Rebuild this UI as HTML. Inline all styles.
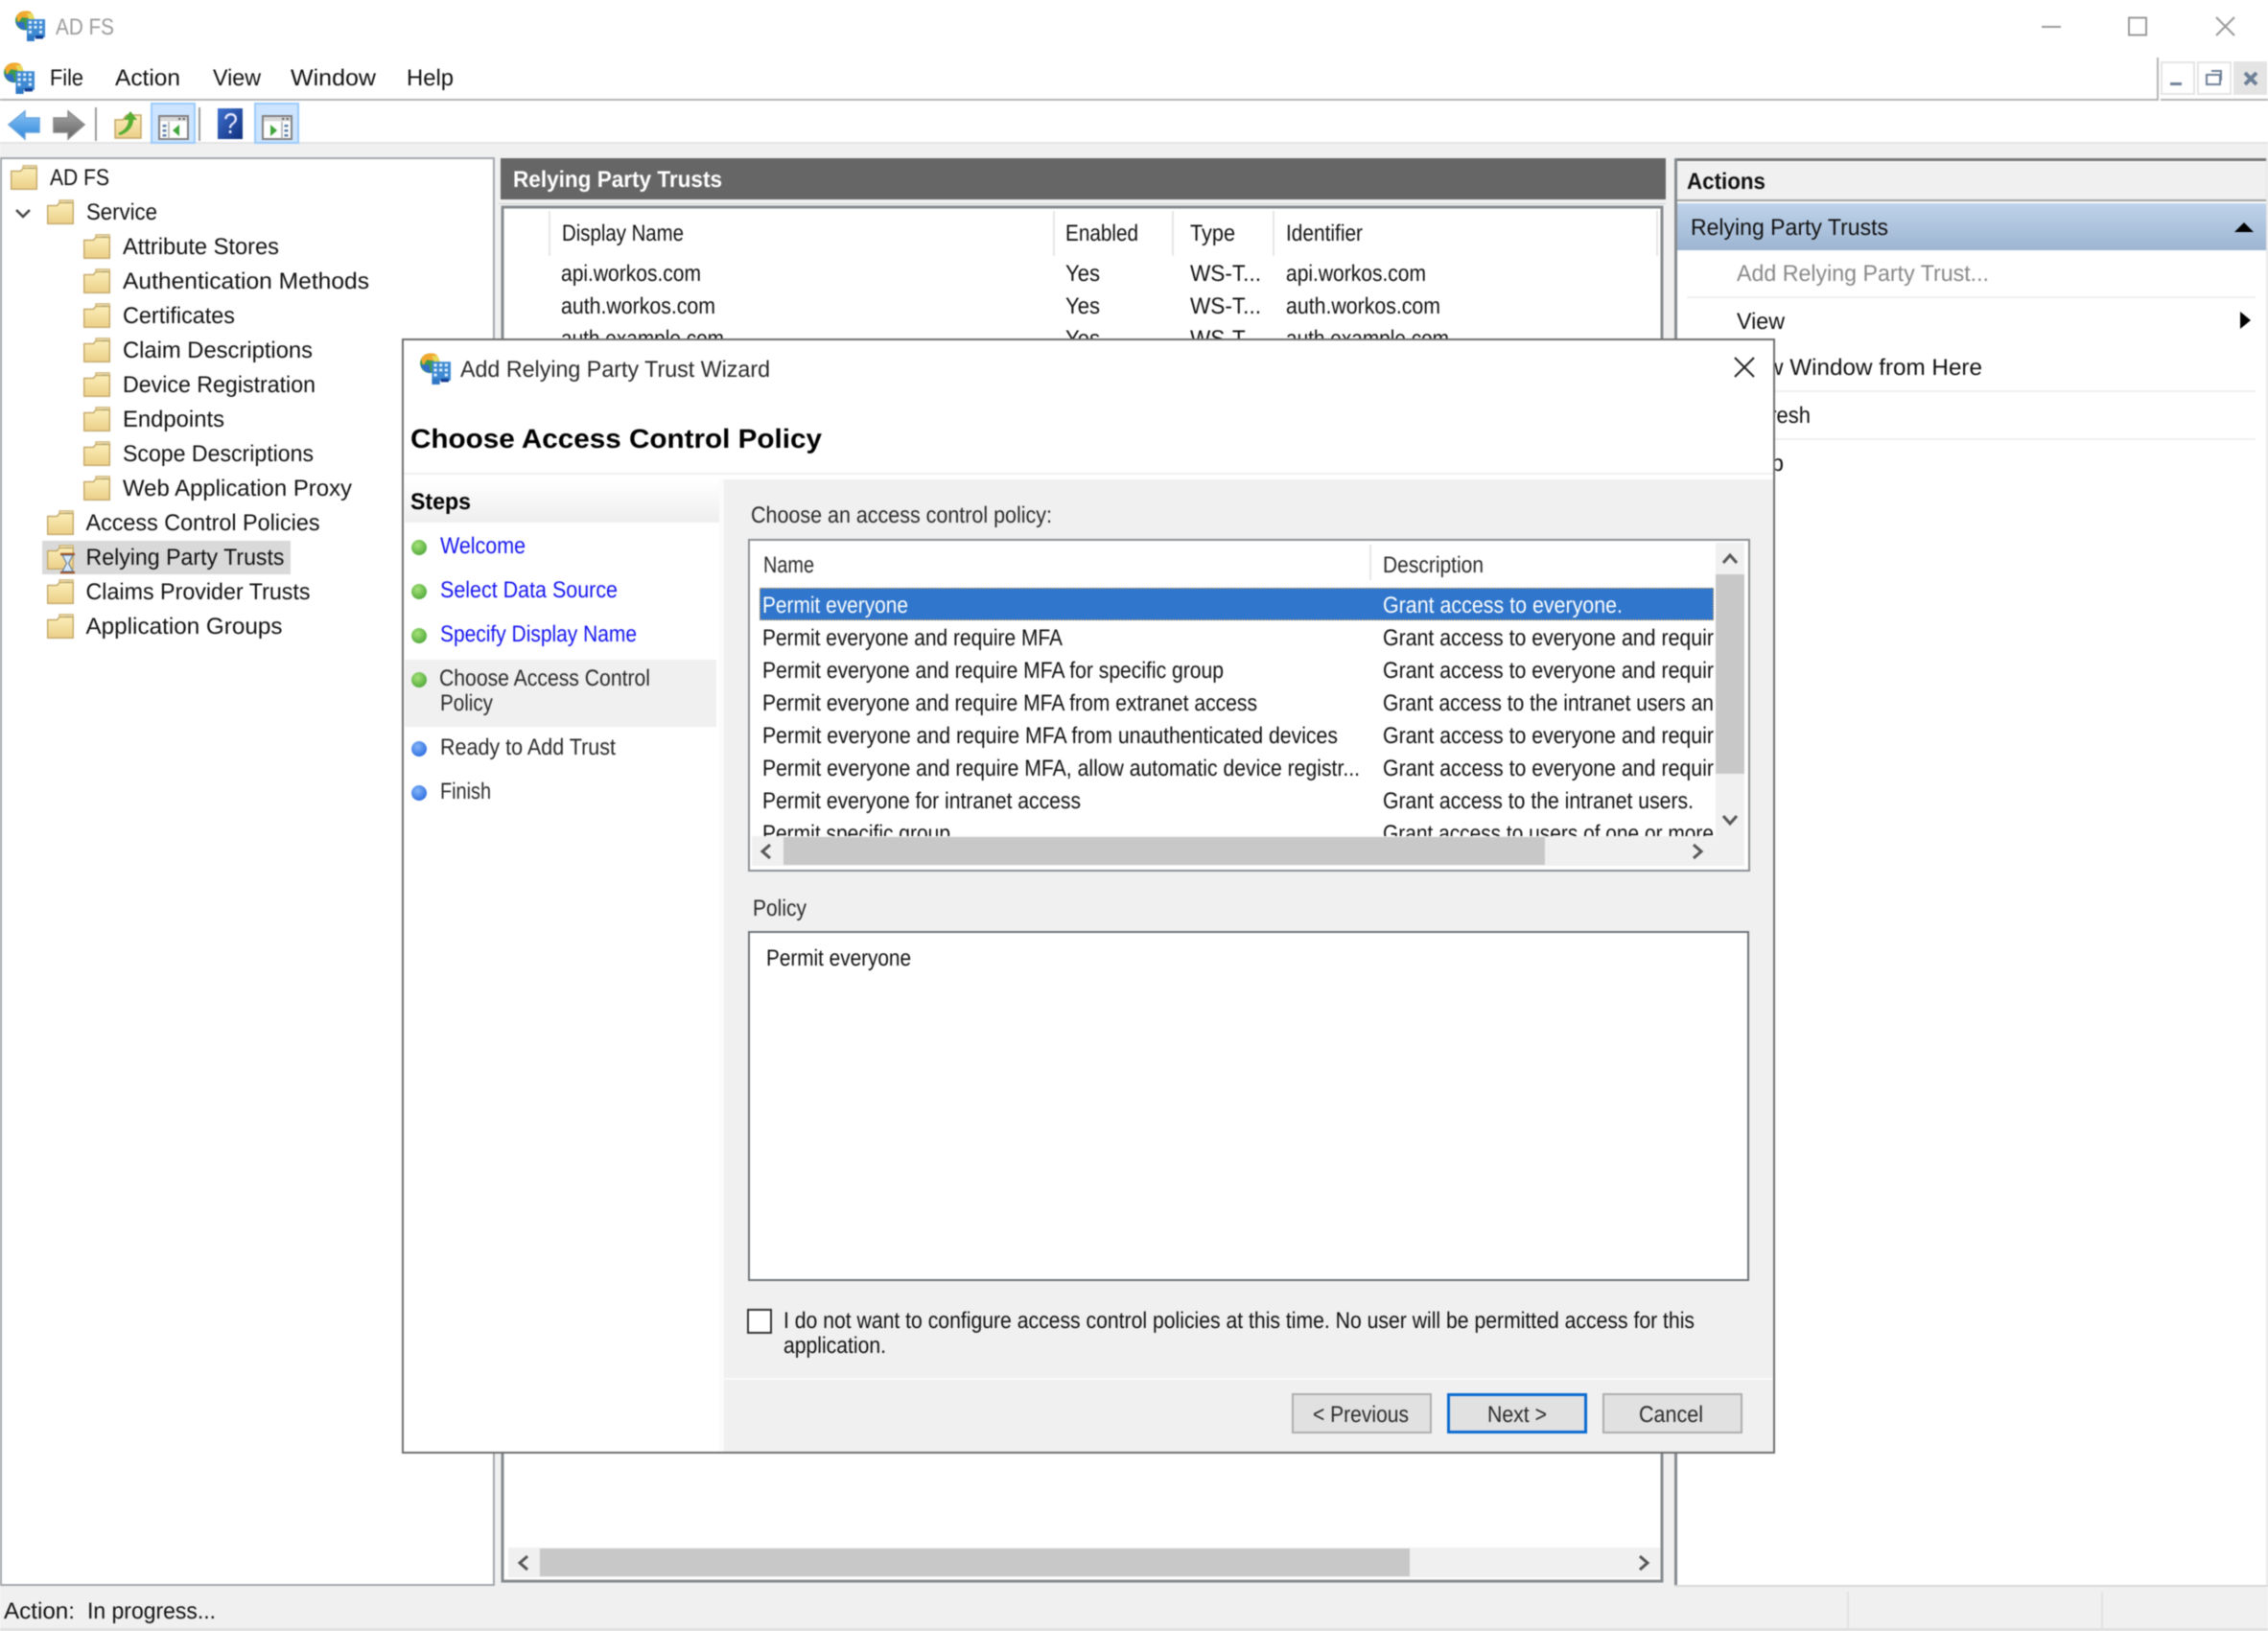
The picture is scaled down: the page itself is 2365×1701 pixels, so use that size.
<!DOCTYPE html>
<html lang="en">
<head>
<meta charset="utf-8">
<title>AD FS</title>
<style>
html,body{margin:0;padding:0;background:#fff;width:2365px;height:1701px;overflow:hidden}
svg{display:block;filter:blur(.4px)}
text{font-family:"Liberation Sans",Arial,sans-serif;font-size:24px;fill:#111;text-rendering:geometricPrecision}
.b{font-weight:bold}
.l{fill:#1414f0}
.g{fill:#2a2a2a}
.w{fill:#fff}
</style>
</head>
<body>
<svg xmlns="http://www.w3.org/2000/svg" width="2365" height="1701" viewBox="0 0 2365 1701">
<defs>
<linearGradient id="fg" x1="0" y1="0" x2="0" y2="1"><stop offset="0" stop-color="#fbeeb9"/><stop offset="1" stop-color="#ebcf88"/></linearGradient>
<linearGradient id="bluebar" x1="0" y1="0" x2="0" y2="1"><stop offset="0" stop-color="#bfd3ea"/><stop offset="1" stop-color="#9db5d2"/></linearGradient>
<linearGradient id="steps" x1="0" y1="0" x2="0" y2="1"><stop offset="0" stop-color="#fff"/><stop offset="1" stop-color="#eeeeee"/></linearGradient>
<linearGradient id="backg" x1="0" y1="0" x2="0" y2="1"><stop offset="0" stop-color="#8cc6f5"/><stop offset="1" stop-color="#2e86dc"/></linearGradient>
<linearGradient id="fwdg" x1="0" y1="0" x2="0" y2="1"><stop offset="0" stop-color="#a8a8a8"/><stop offset="1" stop-color="#636363"/></linearGradient>
<linearGradient id="helpg" x1="0" y1="0" x2="1" y2="1"><stop offset="0" stop-color="#3f72d0"/><stop offset="1" stop-color="#102f7c"/></linearGradient>
<radialGradient id="gb" cx=".4" cy=".35" r=".7"><stop offset="0" stop-color="#a6e27a"/><stop offset="1" stop-color="#4fa83a"/></radialGradient>
<radialGradient id="bb" cx=".4" cy=".35" r=".7"><stop offset="0" stop-color="#86b6f8"/><stop offset="1" stop-color="#2b6be0"/></radialGradient>
<symbol id="folder" viewBox="0 0 28 26" overflow="visible">
<path d="M13 0.8H27.2V8H13z" fill="#f6e7b4" stroke="#c9ad6d" stroke-width="1.2"/>
<rect x="19" y="2.5" width="6" height="2.5" fill="#6db4ea"/>
<path d="M0.7 6.5H10.5L13 3.5H27.3V25.3H0.7z" fill="url(#fg)" stroke="#c4a868" stroke-width="1.4"/>
</symbol>
<symbol id="app" viewBox="0 0 32 32" overflow="visible">
<circle cx="11" cy="10.5" r="10" fill="#3e9a4a"/>
<path d="M2 6C5 0 14-1 18 2L14 8 8 7 4 13z" fill="#f2a92f"/>
<path d="M1.5 12C3 17 7 20 12 20.5L10 12z" fill="#2f6fc9"/>
<path d="M13 3L19 3 21 9 15 9z" fill="#e7d95a"/>
<rect x="13" y="9" width="19" height="19" fill="#3f8ad2"/>
<g fill="#dff0ff"><rect x="15" y="11" width="3" height="2.8"/><rect x="20.5" y="11" width="3" height="2.8"/><rect x="26" y="11" width="3" height="2.8"/><rect x="15" y="16" width="3" height="2.8"/><rect x="20.5" y="16" width="3" height="2.8"/><rect x="26" y="16" width="3" height="2.8"/><rect x="15" y="21" width="3" height="2.8"/><rect x="26" y="21" width="3" height="2.8"/></g>
<rect x="13" y="26" width="8" height="6" fill="#2f78c6"/><rect x="22" y="26" width="8" height="3.5" fill="#123e92"/>
</symbol>
<symbol id="paneL" viewBox="0 0 32 26" overflow="visible">
<rect x="1" y="1" width="30" height="24" fill="#fff" stroke="#808080" stroke-width="2"/>
<rect x="2" y="2" width="28" height="4.5" fill="#d8d8d8"/>
<rect x="21" y="3" width="2.5" height="2" fill="#666"/><rect x="25.5" y="3" width="2.5" height="2" fill="#666"/>
<path d="M11 7V25" stroke="#aaa" stroke-width="1.5"/>
<g fill="#5f7fa8"><rect x="4.5" y="10" width="4" height="2.5"/><rect x="4.5" y="15" width="4" height="2.5"/><rect x="4.5" y="20" width="4" height="2.5"/></g>
<path d="M22 10V22L15 16z" fill="#3fa53a"/>
</symbol>
<symbol id="paneR" viewBox="0 0 32 26" overflow="visible">
<rect x="1" y="1" width="30" height="24" fill="#fff" stroke="#808080" stroke-width="2"/>
<rect x="2" y="2" width="28" height="4.5" fill="#d8d8d8"/>
<rect x="21" y="3" width="2.5" height="2" fill="#666"/><rect x="25.5" y="3" width="2.5" height="2" fill="#666"/>
<path d="M21 7V25" stroke="#aaa" stroke-width="1.5"/>
<g fill="#5f7fa8"><rect x="23.5" y="10" width="4" height="2.5"/><rect x="23.5" y="15" width="4" height="2.5"/><rect x="23.5" y="20" width="4" height="2.5"/></g>
<path d="M9 10V22L16 16z" fill="#3fa53a"/>
</symbol>
<clipPath id="rowsclip"><rect x="784" y="606" width="1003" height="266"/></clipPath>
</defs>

<!-- window -->
<rect width="2365" height="150" fill="#fff"/>
<rect y="150" width="2365" height="1551" fill="#f0f0f0"/>
<rect y="148" width="2365" height="2" fill="#e4e4e4"/>
<use href="#app" x="15" y="11" width="32" height="32"/>
<text x="58" y="36" textLength="61" lengthAdjust="spacingAndGlyphs" style="fill:#9b9b9b">AD FS</text>
<path d="M2129 28H2149" stroke="#9a9a9a" stroke-width="2" fill="none"/>
<rect x="2220" y="18.500" width="18" height="18" fill="none" stroke="#9a9a9a" stroke-width="2"/>
<path d="M2311 18L2330 37M2330 18L2311 37" stroke="#9a9a9a" stroke-width="2" fill="none"/>

<!-- menu -->
<use href="#app" x="3" y="65" width="33" height="33"/>
<text x="52" y="89" textLength="35" lengthAdjust="spacingAndGlyphs">File</text>
<text x="120" y="89" textLength="68" lengthAdjust="spacingAndGlyphs">Action</text>
<text x="222" y="89" textLength="50" lengthAdjust="spacingAndGlyphs">View</text>
<text x="303" y="89" textLength="89" lengthAdjust="spacingAndGlyphs">Window</text>
<text x="424" y="89" textLength="49" lengthAdjust="spacingAndGlyphs">Help</text>
<rect y="103" width="2250" height="2" fill="#b4b4b4"/>
<rect x="2249" y="60" width="2" height="45" fill="#b4b4b4"/>
<rect x="2253" y="103" width="112" height="2" fill="#b4b4b4"/>
<rect x="2254" y="65" width="34" height="33" fill="#fff" stroke="#e4e4e4" stroke-width="2"/>
<rect x="2292" y="65" width="34" height="33" fill="#fff" stroke="#e4e4e4" stroke-width="2"/>
<rect x="2329" y="64" width="35" height="35" fill="#e4e4e4"/>
<rect x="2263" y="86" width="12" height="3" fill="#6d7f96"/>
<path d="M2306 74H2316V84" fill="none" stroke="#6d7f96" stroke-width="2"/>
<rect x="2301" y="78" width="14" height="10" fill="#fff" stroke="#6d7f96" stroke-width="2"/>
<path d="M2341 76L2353 88M2353 76L2341 88" stroke="#6d7f96" stroke-width="4"/>

<!-- toolbar -->
<path d="M9 130L26 116V123H41V138H26V145z" fill="url(#backg)" stroke="#6aa5dd" stroke-width="1.5"/>
<path d="M88 130L71 116V123H56V138H71V145z" fill="url(#fwdg)" stroke="#8a8a8a" stroke-width="1.5"/>
<rect x="99" y="112" width="2" height="35" fill="#9a9a9a"/>
<path d="M120 125H128L132 120H147V144H120z" fill="url(#fg)" stroke="#c4a868" stroke-width="1.5"/>
<path d="M123 139C130 136 134 131 134 125H129L136 116 143 125H139C139 133 132 139 125 141z" fill="#55ad32"/>
<rect x="158" y="108" width="45" height="41" fill="#cce4ff" stroke="#9ccbfa" stroke-width="2"/>
<use href="#paneL" x="165" y="120" width="32" height="26"/>
<rect x="207" y="112" width="2" height="35" fill="#9a9a9a"/>
<rect x="227" y="113" width="26" height="32" fill="url(#helpg)"/>
<text x="233" y="139" textLength="15" lengthAdjust="spacingAndGlyphs" class="w" style="font-size:30px;fill:#e6e6ff">?</text>
<rect x="266" y="108" width="45" height="41" fill="#cce4ff" stroke="#9ccbfa" stroke-width="2"/>
<use href="#paneR" x="273" y="120" width="32" height="26"/>

<!-- tree panel -->
<rect x="1" y="165" width="514" height="1488" fill="#fff" stroke="#a3a7ab" stroke-width="2"/>
<rect x="44" y="564" width="259" height="35" fill="#d9d9d9"/>
<use href="#folder" x="11" y="172" width="28" height="26"/>
<path d="M17 219L24 226 31 219" fill="none" stroke="#444" stroke-width="2.500"/>
<use href="#folder" x="49" y="208" width="28" height="26"/>
<use href="#folder" x="87" y="244" width="28" height="26"/>
<use href="#folder" x="87" y="280" width="28" height="26"/>
<use href="#folder" x="87" y="316" width="28" height="26"/>
<use href="#folder" x="87" y="352" width="28" height="26"/>
<use href="#folder" x="87" y="388" width="28" height="26"/>
<use href="#folder" x="87" y="424" width="28" height="26"/>
<use href="#folder" x="87" y="460" width="28" height="26"/>
<use href="#folder" x="87" y="496" width="28" height="26"/>
<use href="#folder" x="49" y="532" width="28" height="26"/>
<use href="#folder" x="49" y="568" width="28" height="26"/>
<use href="#folder" x="49" y="604" width="28" height="26"/>
<use href="#folder" x="49" y="640" width="28" height="26"/>
<path d="M63 578H78M63 597H78" stroke="#a5521c" stroke-width="2.500"/>
<path d="M65 579H76L71.500 587.500 76 596H65L69.500 587.500z" fill="#d5e9fa" stroke="#5a6f8f" stroke-width="1"/>
<text x="52" y="193" textLength="62" lengthAdjust="spacingAndGlyphs">AD FS</text>
<text x="90" y="229" textLength="74" lengthAdjust="spacingAndGlyphs">Service</text>
<text x="128" y="265" textLength="163" lengthAdjust="spacingAndGlyphs">Attribute Stores</text>
<text x="128" y="301" textLength="257" lengthAdjust="spacingAndGlyphs">Authentication Methods</text>
<text x="128" y="337" textLength="117" lengthAdjust="spacingAndGlyphs">Certificates</text>
<text x="128" y="373" textLength="198" lengthAdjust="spacingAndGlyphs">Claim Descriptions</text>
<text x="128" y="409" textLength="201" lengthAdjust="spacingAndGlyphs">Device Registration</text>
<text x="128" y="445" textLength="106" lengthAdjust="spacingAndGlyphs">Endpoints</text>
<text x="128" y="481" textLength="199" lengthAdjust="spacingAndGlyphs">Scope Descriptions</text>
<text x="128" y="517" textLength="239" lengthAdjust="spacingAndGlyphs">Web Application Proxy</text>
<text x="89.500" y="553" textLength="244" lengthAdjust="spacingAndGlyphs">Access Control Policies</text>
<text x="89.500" y="589" textLength="207" lengthAdjust="spacingAndGlyphs">Relying Party Trusts</text>
<text x="89.500" y="625" textLength="234" lengthAdjust="spacingAndGlyphs">Claims Provider Trusts</text>
<text x="89.500" y="661" textLength="205" lengthAdjust="spacingAndGlyphs">Application Groups</text>

<!-- center panel -->
<rect x="522" y="165" width="1215" height="43" fill="#666"/>
<text x="535" y="195" textLength="218" lengthAdjust="spacingAndGlyphs" class="b w">Relying Party Trusts</text>
<rect x="524" y="216" width="1209" height="1433" fill="#fff" stroke="#858a8e" stroke-width="3"/>
<rect x="520" y="212" width="1217" height="1" fill="#cfcfcf"/>
<g fill="#e6e6e6"><rect x="572" y="220" width="2" height="47"/><rect x="1098" y="220" width="2" height="47"/><rect x="1222" y="220" width="2" height="47"/><rect x="1327" y="220" width="2" height="47"/><rect x="1727" y="220" width="2" height="47"/></g>
<text x="586" y="251" textLength="127" lengthAdjust="spacingAndGlyphs">Display Name</text>
<text x="1111" y="251" textLength="76" lengthAdjust="spacingAndGlyphs">Enabled</text>
<text x="1241" y="251" textLength="47" lengthAdjust="spacingAndGlyphs">Type</text>
<text x="1341" y="251" textLength="80" lengthAdjust="spacingAndGlyphs">Identifier</text>
<text x="585" y="293" textLength="146" lengthAdjust="spacingAndGlyphs">api.workos.com</text>
<text x="1111" y="293" textLength="36" lengthAdjust="spacingAndGlyphs">Yes</text>
<text x="1241" y="293" textLength="74" lengthAdjust="spacingAndGlyphs">WS-T...</text>
<text x="1341" y="293" textLength="146" lengthAdjust="spacingAndGlyphs">api.workos.com</text>
<text x="585" y="327" textLength="161" lengthAdjust="spacingAndGlyphs">auth.workos.com</text>
<text x="1111" y="327" textLength="36" lengthAdjust="spacingAndGlyphs">Yes</text>
<text x="1241" y="327" textLength="74" lengthAdjust="spacingAndGlyphs">WS-T...</text>
<text x="1341" y="327" textLength="161" lengthAdjust="spacingAndGlyphs">auth.workos.com</text>
<text x="585" y="361" textLength="170" lengthAdjust="spacingAndGlyphs">auth.example.com</text>
<text x="1111" y="361" textLength="36" lengthAdjust="spacingAndGlyphs">Yes</text>
<text x="1241" y="361" textLength="74" lengthAdjust="spacingAndGlyphs">WS-T...</text>
<text x="1341" y="361" textLength="170" lengthAdjust="spacingAndGlyphs">auth.example.com</text>
<rect x="530" y="1614" width="1201" height="31" fill="#f0f0f0"/>
<rect x="563" y="1615" width="907" height="29" fill="#c8c8c8"/>
<path d="M550 1623L542 1630 550 1637" fill="none" stroke="#555" stroke-width="3"/>
<path d="M1710 1623L1718 1630 1710 1637" fill="none" stroke="#555" stroke-width="3"/>

<!-- actions -->
<rect x="1747" y="165" width="618" height="1488" fill="#fff"/>
<rect x="1747" y="165" width="618" height="3" fill="#777"/>
<rect x="1746" y="165" width="3" height="1488" fill="#858a8e"/>
<rect x="1749" y="169" width="614" height="39" fill="#f0f0f0"/>
<rect x="1749" y="208" width="614" height="2" fill="#a0a0a0"/>
<rect x="1749" y="212" width="614" height="49" fill="url(#bluebar)"/>
<rect x="2363" y="165" width="2" height="1488" fill="#e8e8e8"/>
<rect x="1746" y="1653" width="619" height="2" fill="#d8d8d8"/>
<text x="1759" y="197" textLength="82" lengthAdjust="spacingAndGlyphs" class="b">Actions</text>
<text x="1763" y="245" textLength="206" lengthAdjust="spacingAndGlyphs">Relying Party Trusts</text>
<path d="M2330 242L2340 232 2350 242z" fill="#000"/>
<text x="1811" y="293" textLength="263" lengthAdjust="spacingAndGlyphs" style="fill:#888">Add Relying Party Trust...</text>
<rect x="1759" y="309" width="593" height="2" fill="#f0f0f0"/>
<text x="1811" y="343" textLength="50" lengthAdjust="spacingAndGlyphs">View</text>
<path d="M2336 325L2347 334 2336 343z" fill="#000"/>
<text x="1811" y="391" textLength="256" lengthAdjust="spacingAndGlyphs">New Window from Here</text>
<rect x="1759" y="407" width="593" height="2" fill="#f0f0f0"/>
<text x="1811" y="441" textLength="77" lengthAdjust="spacingAndGlyphs">Refresh</text>
<rect x="1759" y="457" width="593" height="2" fill="#f0f0f0"/>
<text x="1811" y="491" textLength="49" lengthAdjust="spacingAndGlyphs">Help</text>

<!-- status bar -->
<rect y="1655" width="2365" height="44" fill="#f0f0f0"/>
<rect y="1698" width="2365" height="3" fill="#e0e0e0"/>
<rect x="1926" y="1660" width="2" height="38" fill="#e2e2e2"/>
<rect x="2191" y="1660" width="2" height="38" fill="#e2e2e2"/>
<text x="4" y="1688" textLength="74" lengthAdjust="spacingAndGlyphs">Action:</text>
<text x="91" y="1688" textLength="134" lengthAdjust="spacingAndGlyphs">In progress...</text>

<!-- dialog -->
<rect x="420" y="354" width="1430" height="1161" fill="#fff" stroke="#6f6f6f" stroke-width="2"/>
<use href="#app" x="437" y="368" width="33" height="33"/>
<text x="480" y="393" textLength="323" lengthAdjust="spacingAndGlyphs" class="g">Add Relying Party Trust Wizard</text>
<path d="M1809 373L1829 393M1829 373L1809 393" stroke="#222" stroke-width="2"/>
<text x="428" y="467" textLength="429" lengthAdjust="spacingAndGlyphs" class="b" style="font-size:28px;fill:#000">Choose Access Control Policy</text>
<rect x="421" y="493" width="1428" height="2" fill="#f0f0f0"/>
<rect x="422" y="501" width="328" height="44" fill="url(#steps)"/>
<rect x="750" y="500" width="5" height="1014" fill="#fbfbfb"/>
<text x="428" y="531" textLength="63" lengthAdjust="spacingAndGlyphs" class="b" style="fill:#000">Steps</text>
<rect x="422" y="688" width="325" height="70" fill="#f0f0f0"/>
<circle cx="437" cy="571" r="8" fill="url(#gb)"/>
<circle cx="437" cy="617" r="8" fill="url(#gb)"/>
<circle cx="437" cy="663" r="8" fill="url(#gb)"/>
<circle cx="437" cy="709" r="8" fill="url(#gb)"/>
<circle cx="437" cy="781" r="8" fill="url(#bb)"/>
<circle cx="437" cy="827" r="8" fill="url(#bb)"/>
<text x="459" y="577" textLength="89" lengthAdjust="spacingAndGlyphs" class="l">Welcome</text>
<text x="459" y="623" textLength="185" lengthAdjust="spacingAndGlyphs" class="l">Select Data Source</text>
<text x="459" y="669" textLength="205" lengthAdjust="spacingAndGlyphs" class="l">Specify Display Name</text>
<text x="458" y="715" textLength="220" lengthAdjust="spacingAndGlyphs" class="g">Choose Access Control</text>
<text x="459" y="741" textLength="55" lengthAdjust="spacingAndGlyphs" class="g">Policy</text>
<text x="459" y="787" textLength="183" lengthAdjust="spacingAndGlyphs" class="g">Ready to Add Trust</text>
<text x="459" y="833" textLength="53" lengthAdjust="spacingAndGlyphs" class="g">Finish</text>

<rect x="755" y="500" width="1094" height="1014" fill="#f0f0f0"/>
<rect x="755" y="1437" width="1094" height="2" fill="#fafafa"/>
<text x="783" y="545" textLength="314" lengthAdjust="spacingAndGlyphs" class="g">Choose an access control policy:</text>
<rect x="781" y="563" width="1043" height="345" fill="#fff" stroke="#8b8f93" stroke-width="2"/>
<rect x="1428" y="568" width="2" height="37" fill="#e6e6e6"/>
<text x="796" y="597" textLength="53" lengthAdjust="spacingAndGlyphs" class="g">Name</text>
<text x="1442" y="597" textLength="105" lengthAdjust="spacingAndGlyphs" class="g">Description</text>
<rect x="792" y="613" width="995" height="34" fill="#2f76cc"/>
<rect x="792.500" y="613.500" width="994" height="33" fill="none" stroke="#e8a33a" stroke-width="1" stroke-dasharray="1.500 1.500"/>
<g clip-path="url(#rowsclip)">
<text x="795" y="639" textLength="152" lengthAdjust="spacingAndGlyphs" class="w">Permit everyone</text>
<text x="1442" y="639" textLength="250" lengthAdjust="spacingAndGlyphs" class="w">Grant access to everyone.</text>
<text x="795" y="673" textLength="313" lengthAdjust="spacingAndGlyphs">Permit everyone and require MFA</text>
<text x="1442" y="673" textLength="345" lengthAdjust="spacingAndGlyphs">Grant access to everyone and requir</text>
<text x="795" y="707" textLength="481" lengthAdjust="spacingAndGlyphs">Permit everyone and require MFA for specific group</text>
<text x="1442" y="707" textLength="345" lengthAdjust="spacingAndGlyphs">Grant access to everyone and requir</text>
<text x="795" y="741" textLength="516" lengthAdjust="spacingAndGlyphs">Permit everyone and require MFA from extranet access</text>
<text x="1442" y="741" textLength="345" lengthAdjust="spacingAndGlyphs">Grant access to the intranet users an</text>
<text x="795" y="775" textLength="600" lengthAdjust="spacingAndGlyphs">Permit everyone and require MFA from unauthenticated devices</text>
<text x="1442" y="775" textLength="345" lengthAdjust="spacingAndGlyphs">Grant access to everyone and requir</text>
<text x="795" y="809" textLength="623" lengthAdjust="spacingAndGlyphs">Permit everyone and require MFA, allow automatic device registr...</text>
<text x="1442" y="809" textLength="345" lengthAdjust="spacingAndGlyphs">Grant access to everyone and requir</text>
<text x="795" y="843" textLength="332" lengthAdjust="spacingAndGlyphs">Permit everyone for intranet access</text>
<text x="1442" y="843" textLength="324" lengthAdjust="spacingAndGlyphs">Grant access to the intranet users.</text>
<text x="795" y="877" textLength="196" lengthAdjust="spacingAndGlyphs">Permit specific group</text>
<text x="1442" y="877" textLength="345" lengthAdjust="spacingAndGlyphs">Grant access to users of one or more</text>
</g>
<rect x="1789" y="566" width="30" height="306" fill="#f0f0f0"/>
<rect x="1789" y="599" width="30" height="208" fill="#c8c8c8"/>
<path d="M1797 587L1804 579 1811 587" fill="none" stroke="#555" stroke-width="3"/>
<path d="M1797 851L1804 859 1811 851" fill="none" stroke="#555" stroke-width="3"/>
<rect x="784" y="872" width="1035" height="31" fill="#f0f0f0"/>
<rect x="817" y="873" width="794" height="29" fill="#c8c8c8"/>
<path d="M803 881L795 888 803 895" fill="none" stroke="#555" stroke-width="3"/>
<path d="M1766 881L1774 888 1766 895" fill="none" stroke="#555" stroke-width="3"/>

<text x="785" y="955" textLength="56" lengthAdjust="spacingAndGlyphs" class="g">Policy</text>
<rect x="781" y="972" width="1042" height="363" fill="#fff" stroke="#6f7377" stroke-width="2"/>
<text x="799" y="1007" textLength="151" lengthAdjust="spacingAndGlyphs">Permit everyone</text>

<rect x="780" y="1366" width="24" height="24" fill="#fff" stroke="#333" stroke-width="2"/>
<text x="817" y="1385" textLength="950" lengthAdjust="spacingAndGlyphs">I do not want to configure access control policies at this time. No user will be permitted access for this</text>
<text x="817" y="1411" textLength="107" lengthAdjust="spacingAndGlyphs">application.</text>

<rect x="1348" y="1454" width="144" height="40" fill="#e1e1e1" stroke="#adadad" stroke-width="2"/>
<text x="1369" y="1483" textLength="100" lengthAdjust="spacingAndGlyphs" class="g">&lt; Previous</text>
<rect x="1510.500" y="1454.500" width="143" height="39" fill="#e1e1e1" stroke="#0a6ad0" stroke-width="3"/>
<text x="1551" y="1483" textLength="62" lengthAdjust="spacingAndGlyphs" class="g">Next &gt;</text>
<rect x="1672" y="1454" width="144" height="40" fill="#e1e1e1" stroke="#adadad" stroke-width="2"/>
<text x="1709" y="1483" textLength="67" lengthAdjust="spacingAndGlyphs" class="g">Cancel</text>
<rect x="420" y="354" width="1430" height="1161" fill="none" stroke="#6f6f6f" stroke-width="2"/>
</svg>
</body>
</html>
